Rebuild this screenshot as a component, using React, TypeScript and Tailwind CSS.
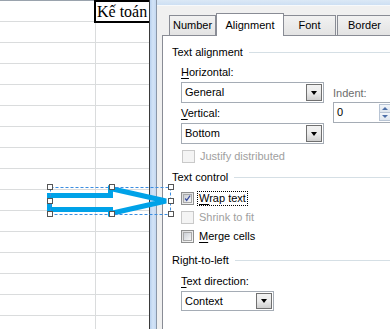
import React from "react";

const F = { fontFamily: '"Liberation Sans", Arial, sans-serif' };

function U({ c }: { c: string }) {
  return <span className="underline underline-offset-[2px]">{c}</span>;
}

function Select({ value, w, h }: { value: string; w: string; h: string }) {
  return (
    <div className={`flex ${h} ${w} items-stretch border border-[#a5acb5] bg-white`}>
      <div className="flex flex-1 items-center pl-[3px] text-[11px] text-black">{value}</div>
      <div className="my-[1px] mr-[1px] flex w-[16px] items-center justify-center border border-[#707070] bg-gradient-to-b from-[#f2f2f2] via-[#ebebeb] to-[#cfcfcf]">
        <div className="h-0 w-0 border-l-[3.5px] border-r-[3.5px] border-t-[4px] border-l-transparent border-r-transparent border-t-black" />
      </div>
    </div>
  );
}

function Check({ checked, disabled }: { checked?: boolean; disabled?: boolean }) {
  return (
    <div
      className={`flex h-[13px] w-[13px] shrink-0 items-center justify-center border ${
        disabled ? "border-[#c9c9c9] bg-[#f4f4f4]" : "border-[#8e8f8f] bg-gradient-to-br from-[#dcdcdc] to-[#f7f7f7]"
      }`}
    >
      {!disabled && (
        <div className="flex h-[9px] w-[9px] items-center justify-center border border-[#a9a9a9] bg-gradient-to-br from-[#cbcfd5] to-[#f6f6f6]">
          {checked && (
            <svg width="9" height="9" viewBox="0 0 9 9">
              <path d="M1.5 4.5 L3.5 7 L7.8 0.8" stroke="#3c4f9e" strokeWidth="1.6" fill="none" />
            </svg>
          )}
        </div>
      )}
    </div>
  );
}

function Group({ title }: { title: string }) {
  return (
    <div className="flex h-[13px] items-center gap-[6px]">
      <span className="whitespace-nowrap text-[11px] text-black">{title}</span>
      <div className="h-px flex-1 bg-[#d5dfe5]" />
    </div>
  );
}

export default function App() {
  const rows = Array.from({ length: 16 });
  return (
    <div className="relative flex h-[329px] w-[390px] overflow-hidden bg-white" style={F}>
      {/* spreadsheet */}
      <div className="flex w-[149px] shrink-0 flex-col">
        <div className="flex h-px shrink-0">
          <div className="w-[96px] bg-[#9aa3ad]" />
          <div className="flex-1 bg-[#f0a030]" />
        </div>
        {rows.map((_, i) => (
          <div key={i} className="flex h-[21px] shrink-0 border-b border-[#dadcdd]">
            <div className="w-[96px] shrink-0 border-r border-[#dadcdd]" />
            <div className="relative flex-1">
              {i === 0 && (
                <div className="absolute -left-[2px] -top-[1px] z-10 flex h-[23px] w-[58px] items-center border-[2px] border-black bg-white pl-[1px]">
                  <span
                    className="whitespace-nowrap text-[16px] leading-none text-black"
                    style={{ fontFamily: '"Liberation Serif", "Times New Roman", serif' }}
                  >
                    Kế toán
                  </span>
                </div>
              )}
            </div>
          </div>
        ))}
      </div>

      {/* dialog */}
      <div className="z-20 flex w-[241px] shrink-0 border-l border-[#3a3a3a] bg-[#cfe0f4]">
        <div className="w-[6px] shrink-0 bg-gradient-to-r from-[#b9d1ee] via-[#d3e4f7] to-[#c4d8f1]" />
        <div className="flex min-w-0 flex-1 flex-col border-l border-[#8a97a8]">
          <div className="h-[5px] shrink-0 bg-gradient-to-b from-[#dbe8f6] to-[#cddff3]" />
          <div className="flex flex-1 flex-col border-t border-[#f7f9fb] bg-[#f0f0f0] pl-[5px]">
            {/* tabs */}
            <div className="flex h-[29px] shrink-0 items-end pl-[7px]">
              <div className="flex h-[20px] w-[47px] shrink-0 items-center justify-center border border-b-0 border-[#898c95] bg-gradient-to-b from-[#f2f2f2] to-[#e3e3e3] text-[11px] text-black">
                Number
              </div>
              <div className="relative z-10 -mb-px flex h-[23px] w-[68px] shrink-0 items-start justify-center border border-b-0 border-[#898c95] bg-white pt-[3px] text-[11px] text-black">
                Alignment
              </div>
              <div className="flex h-[20px] w-[52px] shrink-0 items-center justify-center border border-b-0 border-l-0 border-[#898c95] bg-gradient-to-b from-[#f2f2f2] to-[#e3e3e3] text-[11px] text-black">
                Font
              </div>
              <div className="ml-[1px] flex h-[20px] flex-1 items-center justify-start border border-b-0 border-r-0 border-[#898c95] bg-gradient-to-b from-[#f2f2f2] to-[#e3e3e3] pl-[10px] text-[11px] text-black">
                Border
              </div>
            </div>
            {/* panel */}
            <div className="flex flex-1 flex-col border-l border-t border-[#898c95] bg-white pl-[9px] pt-[10px]">
              <Group title="Text alignment" />
              <div className="flex pl-[9px] pt-[7px]">
                <div className="flex flex-col">
                  <div className="h-[13px] text-[11px] leading-[13px] text-black">
                    <U c="H" />orizontal:
                  </div>
                  <div className="pt-[3px]">
                    <Select value="General" w="w-[143px]" h="h-[21px]" />
                  </div>
                  <div className="mt-[4px] h-[13px] text-[11px] leading-[13px] text-black">
                    <U c="V" />ertical:
                  </div>
                  <div className="pt-[3px]">
                    <Select value="Bottom" w="w-[143px]" h="h-[21px]" />
                  </div>
                  <div className="mt-[6px] flex h-[13px] items-center gap-[5px] pl-[1px]">
                    <Check disabled />
                    <span className="text-[11px] leading-[13px] text-[#a0a0a0]">Justify distributed</span>
                  </div>
                </div>
                <div className="flex flex-col pl-[9px] pt-[21px]">
                  <div className="h-[13px] text-[11px] leading-[13px] text-[#6d6d6d]">Indent:</div>
                  <div className="mt-[2px] flex h-[21px] w-[60px] border border-[#a5acb5] bg-white">
                    <div className="flex flex-1 items-center pl-[3px] text-[11px] text-black">0</div>
                    <div className="my-[1px] mr-[1px] flex w-[12px] flex-col">
                      <div className="flex flex-1 items-center justify-center border border-[#b8c4d4] bg-gradient-to-b from-[#f3f6fa] to-[#dfe6ee]">
                        <div className="h-0 w-0 border-b-[3px] border-l-[3px] border-r-[3px] border-b-[#4d6fa8] border-l-transparent border-r-transparent" />
                      </div>
                      <div className="flex flex-1 items-center justify-center border border-t-0 border-[#b8c4d4] bg-gradient-to-b from-[#f3f6fa] to-[#dfe6ee]">
                        <div className="h-0 w-0 border-l-[3px] border-r-[3px] border-t-[3px] border-l-transparent border-r-transparent border-t-[#4d6fa8]" />
                      </div>
                    </div>
                  </div>
                </div>
              </div>

              <div className="mt-[8px]">
                <Group title="Text control" />
              </div>
              <div className="flex flex-col gap-[6px] pl-[9px] pt-[8px]">
                <div className="flex h-[13px] items-center gap-[3px]">
                  <Check checked />
                  <span className="border border-dotted border-black px-[1px] text-[11px] leading-[13px] text-black">
                    <U c="W" />rap text
                  </span>
                </div>
                <div className="flex h-[13px] items-center gap-[5px]">
                  <Check disabled />
                  <span className="text-[11px] leading-[13px] text-[#a0a0a0]">Shrink to fit</span>
                </div>
                <div className="flex h-[13px] items-center gap-[5px]">
                  <Check />
                  <span className="text-[11px] leading-[13px] text-black">
                    <U c="M" />erge cells
                  </span>
                </div>
              </div>

              <div className="mt-[11px]">
                <Group title="Right-to-left" />
              </div>
              <div className="flex flex-col pl-[9px] pt-[8px]">
                <div className="h-[13px] text-[11px] leading-[13px] text-black">
                  <U c="T" />ext direction:
                </div>
                <div className="pt-[3px]">
                  <Select value="Context" w="w-[93px]" h="h-[20px]" />
                </div>
              </div>
            </div>
          </div>
        </div>
      </div>

      {/* shape overlay: arrow with selection */}
      <svg className="absolute left-0 top-0 z-30" width="390" height="329" viewBox="0 0 390 329">
        <polygon
          points="49.5,195.5 110.5,195.5 110.5,188.5 166,201 110.5,213.5 110.5,209.5 49.5,209.5"
          fill="none"
          stroke="#00a2e8"
          strokeWidth="5"
          strokeLinejoin="miter"
          strokeMiterlimit="4"
        />
        <rect x="50.5" y="187.5" width="120" height="27" fill="none" stroke="#3b8de0" strokeWidth="1" strokeDasharray="3 2" />
        {[
          [50, 187],
          [112, 187],
          [171, 187],
          [50, 201],
          [171, 201],
          [50, 214],
          [112, 214],
          [171, 214],
        ].map(([x, y], i) => (
          <rect key={i} x={x - 2.5} y={y - 2.5} width="5" height="5" fill="white" stroke="#555" strokeWidth="1" />
        ))}
      </svg>
    </div>
  );
}
